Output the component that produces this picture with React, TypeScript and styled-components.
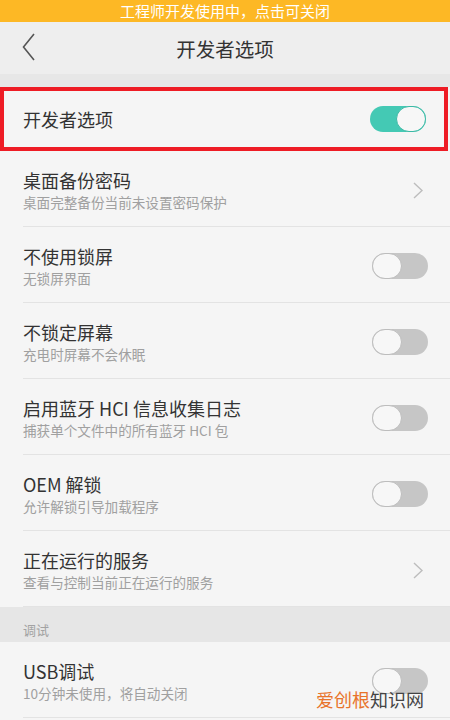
import React from 'react';
import styled, { createGlobalStyle } from 'styled-components';

const GlobalStyle = createGlobalStyle`
    html, body {
        margin: 0;
        padding: 0;
        background: #f5f5f5;
        overflow: hidden;
    }
    body {
        font-family: "Noto Sans CJK SC", "Noto Sans", sans-serif;
    }
`;

const Screen = styled.div`
    position: relative;
    width: 450px;
    height: 720px;
    overflow: hidden;
    background: #f5f5f5;
`;

const Banner = styled.div`
    height: 22px;
    background: #fdb825;
    color: #fff;
    font-size: 15px;
    line-height: 22px;
    text-align: center;
`;

const TopBar = styled.div`
    height: 52px;
    background: #eeeeee;
    display: flex;
    align-items: center;
    justify-content: center;
    position: relative;
`;

const BackButton = styled.div`
    position: absolute;
    left: 22px;
    top: 11px;
    display: flex;
`;

const Title = styled.div`
    font-size: 19.5px;
    color: #333;
`;

const Gap = styled.div`
    height: 13px;
    background: #e7e7e7;
`;

const Row = styled.div<{ $highlight?: boolean }>`
    display: flex;
    align-items: center;
    justify-content: space-between;
    box-sizing: border-box;
    background: #f5f5f5;
    ${p => p.$highlight
        ? `
        height: 64px;
        margin-right: 2px;
        border: 4px solid #ee1c25;
        padding: 0 18px 0 19px;
    `
        : `
        height: 76px;
        margin-left: 23px;
        padding: 17px 22px 14px 0;
        border-bottom: 1px solid #e3e3e3;
    `}
`;

const TextCol = styled.div`
    display: flex;
    flex-direction: column;
`;

const ItemTitle = styled.div`
    font-size: 18px;
    line-height: 24px;
    color: #333;
`;

const ItemSub = styled.div`
    font-size: 13.6px;
    line-height: 20px;
    color: #a0a0a0;
`;

const Toggle = styled.div<{ $on?: boolean }>`
    width: 56px;
    height: 26px;
    border-radius: 13px;
    box-sizing: border-box;
    background: ${p => (p.$on ? '#44c9b4' : '#c6c6c6')};
    display: flex;
    justify-content: ${p => (p.$on ? 'flex-end' : 'flex-start')};
    flex-shrink: 0;
`;

const Knob = styled.div<{ $on?: boolean }>`
    width: 30px;
    height: 26px;
    border-radius: 13px;
    box-sizing: border-box;
    background: #f7f7f7;
    border: 1px solid ${p => (p.$on ? '#3bb9a5' : '#bdbdbd')};
`;

const Chevron = styled.svg`
    margin-right: 5px;
    flex-shrink: 0;
`;

const SectionHeader = styled.div`
    height: 35px;
    box-sizing: border-box;
    background: #e6e6e6;
    padding: 13px 0 0 23px;
    font-size: 13px;
    line-height: 20px;
    color: #a2a2a2;
`;

const Watermark = styled.div`
    position: absolute;
    right: 26px;
    bottom: 11px;
    font-size: 18px;
    line-height: 20px;
    color: #444;
`;

const Accent = styled.span`
    color: #e8732a;
`;

const Switch = ({ on }: { on?: boolean }) => (
    <Toggle $on={on}>
        <Knob $on={on} />
    </Toggle>
);

const Arrow = () => (
    <Chevron width="10" height="17" viewBox="0 0 10 17">
        <path d="M1 1 L9 8.5 L1 16" fill="none" stroke="#bdbdbd" strokeWidth="1.4" />
    </Chevron>
);

type Item = { title: string; sub: string; kind: 'toggle' | 'link' };

const items: Item[] = [
    { title: '桌面备份密码', sub: '桌面完整备份当前未设置密码保护', kind: 'link' },
    { title: '不使用锁屏', sub: '无锁屏界面', kind: 'toggle' },
    { title: '不锁定屏幕', sub: '充电时屏幕不会休眠', kind: 'toggle' },
    { title: '启用蓝牙 HCI 信息收集日志', sub: '捕获单个文件中的所有蓝牙 HCI 包', kind: 'toggle' },
    { title: 'OEM 解锁', sub: '允许解锁引导加载程序', kind: 'toggle' },
    { title: '正在运行的服务', sub: '查看与控制当前正在运行的服务', kind: 'link' },
];

const Setting = ({ item }: { item: Item }) => (
    <Row>
        <TextCol>
            <ItemTitle>{item.title}</ItemTitle>
            <ItemSub>{item.sub}</ItemSub>
        </TextCol>
        {item.kind === 'toggle' ? <Switch /> : <Arrow />}
    </Row>
);

const App = () => (
    <Screen>
        <GlobalStyle />
        <Banner>工程师开发使用中，点击可关闭</Banner>
        <TopBar>
            <BackButton>
                <svg width="13" height="28" viewBox="0 0 13 28">
                    <path d="M12 1 L1.5 14 L12 27" fill="none" stroke="#555" strokeWidth="1.6" />
                </svg>
            </BackButton>
            <Title>开发者选项</Title>
        </TopBar>
        <Gap />
        <Row $highlight>
            <ItemTitle>开发者选项</ItemTitle>
            <Switch on />
        </Row>
        {items.map(item => (
            <Setting key={item.title} item={item} />
        ))}
        <SectionHeader>调试</SectionHeader>
        <Setting item={{ title: 'USB调试', sub: '10分钟未使用，将自动关闭', kind: 'toggle' }} />
        <Watermark>
            <Accent>爱创根</Accent>知识网
        </Watermark>
    </Screen>
);

export default App;
